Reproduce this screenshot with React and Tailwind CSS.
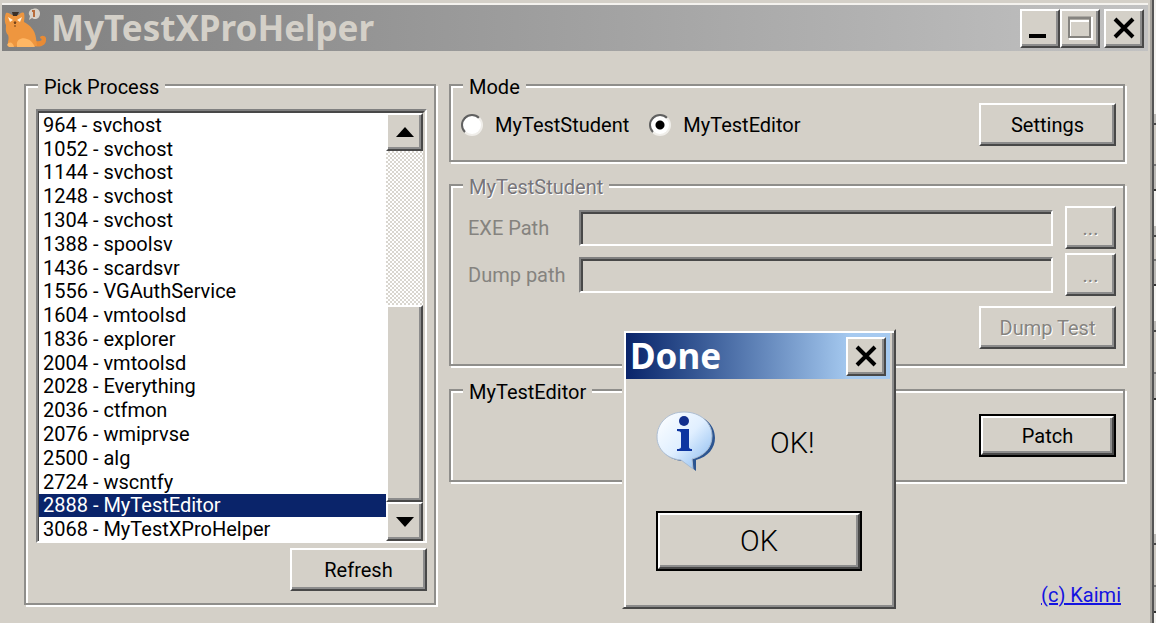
import { useState } from "react";
import clsx from "clsx";

const processes = [
  "964 - svchost",
  "1052 - svchost",
  "1144 - svchost",
  "1248 - svchost",
  "1304 - svchost",
  "1388 - spoolsv",
  "1436 - scardsvr",
  "1556 - VGAuthService",
  "1604 - vmtoolsd",
  "1836 - explorer",
  "2004 - vmtoolsd",
  "2028 - Everything",
  "2036 - ctfmon",
  "2076 - wmiprvse",
  "2500 - alg",
  "2724 - wscntfy",
  "2888 - MyTestEditor",
  "3068 - MyTestXProHelper",
];

const modes = ["MyTestStudent", "MyTestEditor"];

const raised =
  "border-2 border-t-white border-l-white border-r-[#484848] border-b-[#484848] shadow-[inset_-2px_-2px_0_#8c8c8c] bg-[#d4d0c8]";

const Button = ({ children, className, disabled, primary, ...props }) => {
  const button = (
    <button
      type="button"
      disabled={disabled}
      className={clsx(
        "flex items-center justify-center",
        raised,
        disabled && "text-[#85837f] [text-shadow:1px_1px_0_#fff]",
        primary ? "h-full w-full" : className
      )}
      {...props}
    >
      {children}
    </button>
  );

  return primary ? <div className={clsx("border-2 border-black", className)}>{button}</div> : button;
};

const GroupBox = ({ title, disabled, className, children }) => (
  <fieldset
    disabled={disabled}
    className={clsx(
      "min-w-0 border-2 border-[#8f8e8b] shadow-[2px_2px_0_#fff,inset_2px_2px_0_#fff]",
      className
    )}
  >
    <legend
      className={clsx(
        "ml-3 bg-[#d4d0c8] pt-1 pr-1.5 pl-1.5 leading-6",
        disabled && "text-[#77757a] [text-shadow:1px_1px_0_#fff]"
      )}
    >
      {title}
    </legend>
    {children}
  </fieldset>
);

const PathField = ({ id, label }) => (
  <div className="flex items-center">
    <label htmlFor={id} className="w-[111px] text-[#85837f]">
      {label}
    </label>
    <input
      id={id}
      type="text"
      className="h-9 min-w-0 flex-1 border-2 border-t-[#808080] border-l-[#808080] border-r-white border-b-white bg-[#d4d0c8] px-2 shadow-[inset_2px_2px_0_#484848]"
    />
    <Button disabled className="ml-3 h-[43px] w-[51px]" aria-label={`Browse ${label}`}>
      ...
    </Button>
  </div>
);

const CrossIcon = () => (
  <svg viewBox="0 0 24 24" className="h-6 w-6" aria-hidden="true">
    <path d="M3 3 L21 21 M21 3 L3 21" stroke="#000" strokeWidth="4" />
  </svg>
);

const CatIcon = () => (
  <svg viewBox="0 0 44 40" className="h-10 w-11" aria-hidden="true">
    <path d="M30 38 C37 40 43 37 42 30 C41 27 36 27 36 30 C39 31 38 34 32 33Z" fill="#e88b35" />
    <path
      d="M2 5 C4 4 6 6 8 7 L15 7 C16 5 18 4 20 5 C21 8 20 12 20 14 C26 17 31 22 32 30 L33 38 L5 39 C2 35 6 32 4 27 C1 24 2 20 2 17 C0 13 1 7 2 5Z"
      fill="#ee963f"
    />
    <path d="M8 4 H15 L13 8 H9Z" fill="#3c3027" />
    <path d="M4 9 L9 12 L6 14Z M18 9 L13 12 L16 14Z" fill="#fff4df" />
    <path d="M10 14 H12 L11 16Z M10 18 H12" fill="#704019" stroke="#704019" strokeWidth="1" />
    <path d="M13 37 C12 32 18 29 23 31 C27 32 29 35 31 39 H13Z" fill="#ffb764" />
    <path d="M3 37 C5 33 9 34 10 39 H5Z" fill="#ffb764" />
    <path
      d="M29 1 C34 -1 38 4 35 9 C33 12 29 11 28 10 L25 12 L26 8 C23 5 26 1 29 1Z"
      fill="#d8d2c8"
    />
    <path d="M28 3 H31 M30 3 V9" stroke="#b86c3a" strokeWidth="2" />
  </svg>
);

const InfoIcon = () => (
  <svg viewBox="0 0 60 60" className="h-[60px] w-[60px]" aria-hidden="true">
    <defs>
      <linearGradient id="bubble" x1="0" y1="0" x2="1" y2="1">
        <stop offset="0" stopColor="#fff" />
        <stop offset="0.5" stopColor="#e0efff" />
        <stop offset="1" stopColor="#83b6ee" />
      </linearGradient>
    </defs>
    <path
      d="M31 3 C47 3 59 13 59 27 C59 37 52 46 40 49 L40 60 L27 50 C12 49 3 39 3 28 C3 13 15 3 31 3Z"
      fill="#2c5591"
    />
    <path
      d="M28 1 C45 1 56 12 56 25 C56 37 48 45 36 48 L37 58 L25 49 C11 48 1 38 1 26 C1 12 12 1 28 1Z"
      fill="url(#bubble)"
      stroke="#aebed2"
      strokeWidth="1"
    />
    <circle cx="28" cy="10" r="5" fill="#122f8d" />
    <path
      d="M21 18 H33 V36 Q33 38 36 38 V40 H21 V38 Q25 38 25 36 V22 Q25 20 21 20Z"
      fill="#0d35a1"
    />
  </svg>
);

const TitleBar = ({ children }) => (
  <header className="flex h-[46px] shrink-0 items-center bg-linear-to-r from-[#808080] to-[#c2c2c2] pr-1 pl-0.5">
    <CatIcon />
    <h1 className="ml-[3px] font-['Noto_Sans',sans-serif] text-[35px] leading-[46px] font-bold text-[#d4d0c8]">
      {children}
    </h1>
    <div className="ml-auto flex">
      <Button className="h-[39px] w-10" aria-label="Minimize">
        <svg viewBox="0 0 24 24" className="h-6 w-6" aria-hidden="true">
          <path d="M1 20 H18" stroke="#000" strokeWidth="4" />
        </svg>
      </Button>
      <Button disabled className="h-[39px] w-10" aria-label="Maximize">
        <svg viewBox="0 0 26 26" className="h-[26px] w-[26px]" aria-hidden="true">
          <path d="M3 5 V24 H25 V2" fill="none" stroke="#fff" strokeWidth="2" />
          <rect x="2" y="3" width="21" height="19" fill="none" stroke="#85837f" strokeWidth="2" />
          <path d="M1 3 H24" stroke="#85837f" strokeWidth="3" />
          <path d="M4 6 H22" stroke="#fff" strokeWidth="2" />
        </svg>
      </Button>
      <Button className="ml-1 h-[39px] w-10" aria-label="Close">
        <CrossIcon />
      </Button>
    </div>
  </header>
);

const ProcessList = () => {
  const [selected, setSelected] = useState("2888 - MyTestEditor");

  return (
    <div className="flex min-h-0 flex-1 border-2 border-t-[#808080] border-l-[#808080] border-r-white border-b-white bg-white">
      <ul
        role="listbox"
        aria-label="Pick Process"
        className="flex flex-1 flex-col border-t-2 border-l-1 border-[#484848]"
      >
        {processes.map((name) => (
          <li
            key={name}
            role="option"
            aria-selected={selected === name}
            onClick={() => setSelected(name)}
            className={clsx(
              "flex min-h-0 flex-1 items-center pl-1",
              selected === name && "bg-[#0a246a] text-white"
            )}
          >
            {name}
          </li>
        ))}
      </ul>
      <div className="flex w-[39px] flex-col border-t-2 border-r-2 border-t-[#484848] border-r-[#d4d0c8] bg-[repeating-conic-gradient(#ffffff_0_25%,#d9d6cf_0_50%)] bg-size-[4px_4px]">
        <Button className="h-[38px] w-full" aria-label="Scroll up">
          <svg viewBox="0 0 18 10" className="h-2.5 w-[18px]" aria-hidden="true">
            <path d="M0 10 L9 0 L18 10Z" />
          </svg>
        </Button>
        <div className="flex-1" />
        <div className={clsx("h-[197px]", raised)} />
        <Button className="h-[39px] w-full" aria-label="Scroll down">
          <svg viewBox="0 0 18 10" className="h-2.5 w-[18px]" aria-hidden="true">
            <path d="M0 0 H18 L9 10Z" />
          </svg>
        </Button>
      </div>
    </div>
  );
};

const DoneDialog = () => (
  <div
    role="dialog"
    aria-labelledby="dialog-title"
    className="absolute top-[329px] left-[622px] w-[274px] border-2 border-t-[#d4d0c8] border-l-[#d4d0c8] border-r-[#484848] border-b-[#484848] bg-[#d4d0c8] pr-1 pb-9 pl-0.5 shadow-[inset_2px_2px_0_#fff,inset_-2px_-2px_0_#8c8c8c]"
  >
    <div className="mt-0.5 flex h-[46px] items-center justify-between bg-linear-to-r from-[#0a246a] to-[#a6caf0] to-85% pr-1 pl-1">
      <h2
        id="dialog-title"
        className="font-['Noto_Sans',sans-serif] text-[35px] leading-[46px] font-bold text-white"
      >
        Done
      </h2>
      <Button className="h-[39px] w-10" aria-label="Close">
        <CrossIcon />
      </Button>
    </div>
    <div className="mt-8 ml-[30px] flex items-center gap-[54px]">
      <InfoIcon />
      <p className="pt-1 text-[29px] font-light">OK!</p>
    </div>
    <Button primary className="mt-10 ml-[30px] h-[60px] w-[206px] text-[29px] font-light">
      OK
    </Button>
  </div>
);

// Sliver of the window behind, visible along the right edge
const Backdrop = () => (
  <div className="flex w-0.5 flex-col bg-[#f4f3f0]" aria-hidden="true">
    <div className="mt-[114px] h-[11px] border-b-2 border-[#484848] bg-[#bdbbb7]" />
    <div className="h-[41px] border-b-2 border-[#777] bg-[#cfcbc4]" />
    <div className="h-[25px] border-b-2 border-[#333] bg-[#bdbbb7]" />
    <div className="mt-[35px] h-[11px] border-b-2 border-[#484848] bg-[#bdbbb7]" />
    <div className="h-6 border-b-2 border-[#777] bg-[#cfcbc4]" />
    <div className="h-[25px] border-b-2 border-[#333] bg-[#bdbbb7]" />
    <div className="mt-[35px] h-[11px] border-b-2 border-[#484848] bg-[#bdbbb7]" />
    <div className="h-[42px] border-b-2 border-[#777] bg-[#cfcbc4]" />
    <div className="h-[26px] border-b-2 border-[#333] bg-[#bdbbb7]" />
    <div className="mt-[134px] h-[11px] border-b-2 border-[#484848] bg-[#bdbbb7]" />
    <div className="h-[42px] border-b-2 border-[#777] bg-[#cfcbc4]" />
    <div className="h-[26px] border-b-2 border-[#333] bg-[#bdbbb7]" />
  </div>
);

const App = () => {
  const [mode, setMode] = useState("MyTestEditor");

  return (
    <div className="flex h-screen overflow-hidden bg-[#d4d0c8] font-[Roboto,sans-serif] text-[20px] leading-6 text-black">
      <main className="relative flex min-w-0 flex-1 flex-col border-r-2 border-[#555] pr-1 pl-0.5 shadow-[inset_-2px_0_0_#a5a29c]">
        <div className="mt-[3px] h-0.5 shrink-0 bg-[#f4f2ee]" />
        <TitleBar>MyTestXProHelper</TitleBar>

        <div className="flex min-h-0 flex-1 items-start gap-[13px] pt-5 pr-[23px] pl-[22px]">
          <GroupBox title="Pick Process" className="w-[412px] shrink-0">
            <div className="flex h-[504px] flex-col pt-2.5 pr-[7px] pb-3 pl-2.5">
              <ProcessList />
              <Button className="mt-[5px] ml-auto h-[43px] w-[137px]">Refresh</Button>
            </div>
          </GroupBox>

          <div className="flex min-w-0 flex-1 flex-col">
            <GroupBox title="Mode">
              <div className="flex items-start pt-1 pr-[7px] pb-3.5 pl-2.5">
                {modes.map((name) => (
                  <label key={name} className="mt-2.5 mr-5 flex items-center gap-3">
                    <input
                      type="radio"
                      name="mode"
                      checked={mode === name}
                      onChange={() => setMode(name)}
                      className="h-[22px] w-[22px] appearance-none rounded-full border-2 border-t-[#606060] border-l-[#606060] border-r-[#f0eeea] border-b-[#f0eeea] bg-white checked:bg-[radial-gradient(circle,#000_4px,#fff_5px)]"
                    />
                    {name}
                  </label>
                ))}
                <Button className="ml-auto h-[43px] w-[137px]">Settings</Button>
              </div>
            </GroupBox>

            <GroupBox title="MyTestStudent" disabled className="mt-[9px]">
              <div className="flex flex-col gap-1 pt-[7px] pr-[7px] pb-[15px] pl-[17px]">
                <PathField id="exe-path" label="EXE Path" />
                <PathField id="dump-path" label="Dump path" />
                <Button disabled className="mt-1.5 ml-auto h-[43px] w-[137px]">
                  Dump Test
                </Button>
              </div>
            </GroupBox>

            <GroupBox title="MyTestEditor" className="mt-2.5">
              <div className="flex justify-end pt-2.5 pr-[7px] pb-[23px]">
                <Button primary className="h-[43px] w-[137px]">
                  Patch
                </Button>
              </div>
            </GroupBox>

            <a href="#kaimi" className="mt-[101px] mr-1 self-end text-[#1414e0] underline">
              (c) Kaimi
            </a>
          </div>
        </div>

        <DoneDialog />
      </main>
      <Backdrop />
    </div>
  );
};

export default App;
